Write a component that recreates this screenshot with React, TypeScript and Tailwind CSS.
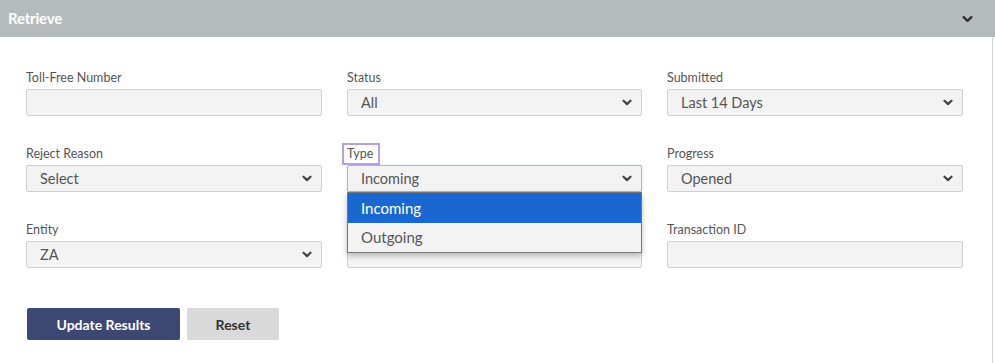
import React from "react";

const Chevron: React.FC<{ className?: string }> = ({ className }) => (
  <svg viewBox="0 0 10 6" className={className} fill="none" stroke="currentColor" strokeWidth="2.2" strokeLinecap="round" strokeLinejoin="round">
    <path d="M1.5 1.2 5 4.6 8.5 1.2" />
  </svg>
);

const Label: React.FC<{ children?: React.ReactNode }> = ({ children }) => (
  <div className="h-[18px] mb-[2px] text-[12.5px] leading-[18px] text-[#555]">{children}</div>
);

const TextBox: React.FC = () => (
  <div className="h-[27px] bg-[#f3f3f3] border border-[#cfcfcf] rounded-[2px]" />
);

const SelectBox: React.FC<{ value: string; focused?: boolean }> = ({ value, focused }) => (
  <div
    className={`h-[27px] bg-[#f3f3f3] border rounded-[2px] flex items-center justify-between pl-[13px] pr-[9px] ${
      focused ? "border-[#8fbde9] shadow-[0_0_2px_#bcd9f5]" : "border-[#cfcfcf]"
    }`}
  >
    <span className="text-[14.5px] text-[#555]">{value}</span>
    <Chevron className="w-[10px] h-[7px] text-[#444]" />
  </div>
);

export default function App() {
  return (
    <div className="w-[995px] h-[363px] bg-white font-['Lato',sans-serif] overflow-hidden">
      <div className="h-[37px] bg-[#b5babc] flex items-center justify-between pl-2 pr-[22px]">
        <span className="text-[15px] font-bold text-white tracking-[-0.2px]">Retrieve</span>
        <Chevron className="w-[11px] h-[8px] text-[#333]" />
      </div>

      <div className="w-[993px] h-[326px] border-r border-[#d4d4d4] pt-8 pl-[26px]">
        <div className="grid grid-cols-[296px_295px_296px] gap-x-[25px] gap-y-[29px]">
          <div>
            <Label>Toll-Free Number</Label>
            <TextBox />
          </div>
          <div>
            <Label>Status</Label>
            <SelectBox value="All" />
          </div>
          <div>
            <Label>Submitted</Label>
            <SelectBox value="Last 14 Days" />
          </div>

          <div>
            <Label>Reject Reason</Label>
            <SelectBox value="Select" />
          </div>
          <div className="relative z-10">
            <Label>
              <span className="relative">
                Type
                <span className="absolute -left-[5px] -top-[3px] w-[38px] h-[22px] border-2 border-[#b99ee6]" />
              </span>
            </Label>
            <SelectBox value="Incoming" focused />
            <div className="absolute left-0 top-[47px] w-full bg-[#f3f3f3] border border-[#767676] shadow-[0_3px_6px_rgba(0,0,0,0.25)] text-[15px]">
              <div className="h-[30px] bg-[#1a67d2] text-white flex items-center pl-[13px]">Incoming</div>
              <div className="h-[29px] text-[#555] flex items-center pl-[13px]">Outgoing</div>
            </div>
          </div>
          <div>
            <Label>Progress</Label>
            <SelectBox value="Opened" />
          </div>

          <div>
            <Label>Entity</Label>
            <SelectBox value="ZA" />
          </div>
          <div>
            <Label />
            <TextBox />
          </div>
          <div>
            <Label>Transaction ID</Label>
            <TextBox />
          </div>
        </div>

        <div className="flex gap-[7px] mt-[40px] ml-px">
          <button className="w-[153px] h-8 bg-[#3d4872] rounded-[2px] text-white text-[14px] font-bold">
            Update Results
          </button>
          <button className="w-[92px] h-8 bg-[#d9d9d9] rounded-[2px] text-[#333] text-[14px] font-bold">
            Reset
          </button>
        </div>
      </div>
    </div>
  );
}
